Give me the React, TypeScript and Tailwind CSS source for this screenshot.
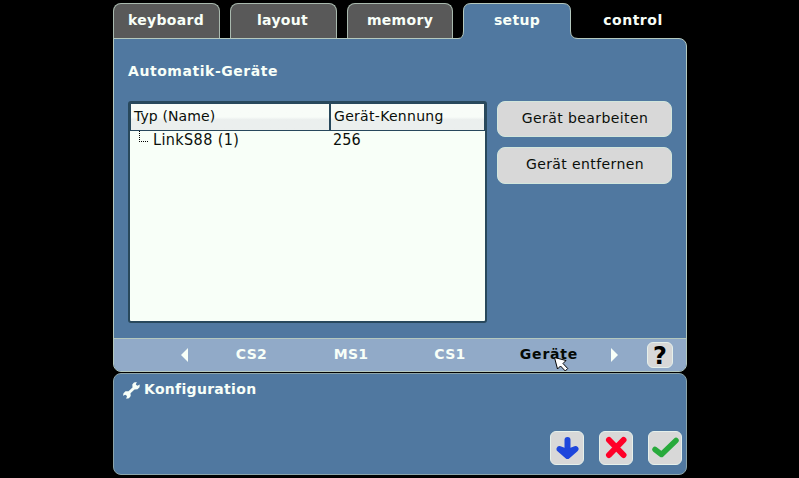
import React from 'react';
import clsx from 'clsx';

interface DeviceRow {
  name: string;
  id: string;
}

const devices: DeviceRow[] = [{ name: 'LinkS88 (1)', id: '256' }];

function Tab({ label, className }: { label: string; className?: string }) {
  return (
    <button className={clsx('h-9 shrink-0 rounded-t-[8px] border border-b-0 border-[#a9b9ae] bg-[#595959] pb-[3px]', className)}>
      {label}
    </button>
  );
}

// Active tab, its outline flares out into the panel below
function ActiveTab({ label }: { label: string }) {
  return (
    <button className="relative z-10 ml-[5px] h-9 w-[118px] shrink-0 pb-[3px]">
      <svg className="absolute left-0 top-0" width="120" height="37" viewBox="0 0 120 37">
        <path d="M0 37V35.5Q5.5 35.5 5.5 28V8Q5.5 .5 13 .5H105Q112.5 .5 112.5 8V28Q112.5 35.5 120 35.5V37Z" fill="#5078a0" />
        <path d="M0 35.5Q5.5 35.5 5.5 28V8Q5.5 .5 13 .5H105Q112.5 .5 112.5 8V28Q112.5 35.5 120 35.5" fill="none" stroke="#b4c8be" />
      </svg>
      <span className="relative">{label}</span>
    </button>
  );
}

function PanelButton({ label, className }: { label: string; className?: string }) {
  return (
    <button
      className={clsx(
        'w-[175px] rounded-[8px] border border-[#d2e6dc] bg-[#d8d8d8] pl-px text-[14px] tracking-[0.4px] text-[#0a0f0a]',
        className,
      )}
    >
      {label}
    </button>
  );
}

function IconButton({ children }: { children: React.ReactNode }) {
  return (
    <button className="flex h-[34px] w-[34px] items-center justify-center rounded-[6px] border border-[#e6f0eb] bg-[#d8d8d8]">
      {children}
    </button>
  );
}

function Cursor() {
  return (
    <svg className="absolute left-[55px] top-[10px]" width="15" height="15" viewBox="0 0 15 15">
      <path d="M.5 .5L12 3.5L9 6.5L13.7 11.5L11.3 14L6.5 9L3.5 12Z" fill="#fff" stroke="#000" />
    </svg>
  );
}

export default function App() {
  return (
    <div className="flex h-[478px] w-[799px] flex-col overflow-hidden bg-black pl-[113px] pt-[3px] font-['DejaVu_Sans',sans-serif] leading-none text-[#f8fff8]">
      {/* Top tabs */}
      <div className="flex h-[35px] w-[574px] gap-[10px] text-[14px] font-bold tracking-[0.3px]">
        <Tab label="keyboard" className="w-[107px] pr-px" />
        <Tab label="layout" className="w-[107px] pr-[2px]" />
        <Tab label="memory" className="w-[106px]" />
        <div className="-ml-[10px] flex shrink-0">
          <ActiveTab label="setup" />
          <button className="h-9 w-[114px] pb-[3px] tracking-[0.5px]">control</button>
        </div>
      </div>

      {/* Setup panel */}
      <main className="flex h-[334px] w-[574px] flex-col overflow-hidden rounded-b-[8px] rounded-tr-[8px] border border-[#b4c8be] bg-[#5078a0]">
        <h1 className="pl-[14px] pt-[25px] text-[14px] font-bold tracking-[0.55px]">Automatik-Geräte</h1>

        <div className="mt-[23px] flex grow gap-[10px] pl-[14px]">
          <div className="h-[222px] w-[359px] rounded-[3px] border-2 border-[#28485c] bg-[#f8fff8] text-[#0a0f0a]">
            <div className="flex h-[28px] border border-[#28485c] bg-linear-to-b from-[#f8fcf8] from-50% to-[#ebefee] to-60% text-[14px] tracking-[0.1px]">
              <div className="w-[200px] border-r-2 border-[#28485c] pl-[3px] pt-[5px]">Typ (Name)</div>
              <div className="pl-[3px] pt-[5px] tracking-[0.3px]">Gerät-Kennung</div>
            </div>
            {devices.map((device) => (
              <div
                key={device.name}
                className="flex h-[19px] font-['DejaVu_Sans_Condensed','DejaVu_Sans',sans-serif] text-[16px] tracking-[0.4px]"
              >
                <div className="flex w-[201px] pl-[9px]">
                  <span className="h-[11px] w-[9px] border-b border-l border-dotted border-black" />
                  <span className="pl-[5px] pt-px">{device.name}</span>
                </div>
                <div className="pl-[2px] pt-px tracking-[0.1px]">{device.id}</div>
              </div>
            ))}
          </div>
          <div className="flex flex-col gap-[10px]">
            <PanelButton label="Gerät bearbeiten" className="h-[36px] pb-[2px]" />
            <PanelButton label="Gerät entfernen" className="h-[37px] pb-[3px]" />
          </div>
        </div>

        {/* Page navigation */}
        <nav className="flex h-[33px] shrink-0 items-center border-t border-[#b4c8be] bg-[#91aac8] pl-[67px] pr-[13px] text-[14px] font-bold tracking-[0.3px]">
          <svg width="7" height="14" viewBox="0 0 7 14">
            <path d="M7 0V14L0 7Z" fill="#f8fff8" />
          </svg>
          <span className="ml-[14px] w-[99px] pb-[2px] text-center">CS2</span>
          <span className="w-[100px] pb-[2px] text-center">MS1</span>
          <span className="w-[98px] pb-[2px] text-center">CS1</span>
          <span className="relative w-[100px] pb-[2px] text-center tracking-[0.8px] text-[#050a05]">
            Geräte
            <Cursor />
          </span>
          <svg className="ml-[12px]" width="7" height="14" viewBox="0 0 7 14">
            <path d="M0 0V14L7 7Z" fill="#f8fff8" />
          </svg>
          <button className="ml-auto h-[26px] w-[26px] rounded-[6px] border border-[#e6f0eb] bg-[#d8d8d8] text-[24px] leading-[26px] tracking-normal text-black">
            ?
          </button>
        </nav>
      </main>

      {/* Status panel */}
      <footer className="mt-px flex h-[102px] w-[574px] flex-col justify-between rounded-[8px] border border-[#8ca5aa] bg-[#5078a0]">
        <div className="flex pl-[9px] pt-[8px]">
          <svg width="17" height="17" viewBox="0 0 17 17">
            <path
              d="M13.8 0L11 .5L9.3 2.5L9.5 5.5L5.5 9.3L2.500 9.300L.5 11.200L0 13.800L2.300 12.800L4 14L3.200 16.800L6 16.200L7.700 14L7.500 11.300L11.500 7.500L14.500 7.200L16.500 5.200L16.800 2.500L14.300 3.800L12.800 2.500Z"
              fill="#f8fff8"
            />
          </svg>
          <span className="pl-[4px] text-[14px] font-bold tracking-[0.3px]">Konfiguration</span>
        </div>
        <div className="flex justify-end gap-[15px] pb-[9px] pr-[4px]">
          <IconButton>
            <svg width="24" height="24" viewBox="0 0 24 24" fill="none" stroke="#1e46dc" strokeWidth="6" strokeLinecap="round" strokeLinejoin="round">
              <path d="M12.5 4V19" />
              <path d="M4.500 13L12.500 20L20.500 13L12.500 16Z" fill="#1e46dc" />
            </svg>
          </IconButton>
          <IconButton>
            <svg width="24" height="24" viewBox="0 0 24 24" fill="none" stroke="#ff0028" strokeWidth="6" strokeLinecap="round">
              <path d="M5 4L19.5 19M19.5 4L5 19" />
            </svg>
          </IconButton>
          <IconButton>
            <svg width="28" height="24" viewBox="0 0 28 24" fill="none" stroke="#28aa3c" strokeWidth="5.5" strokeLinecap="round" strokeLinejoin="round">
              <path d="M4 13.5L10.5 18.5L25 4.500" />
            </svg>
          </IconButton>
        </div>
      </footer>
    </div>
  );
}
